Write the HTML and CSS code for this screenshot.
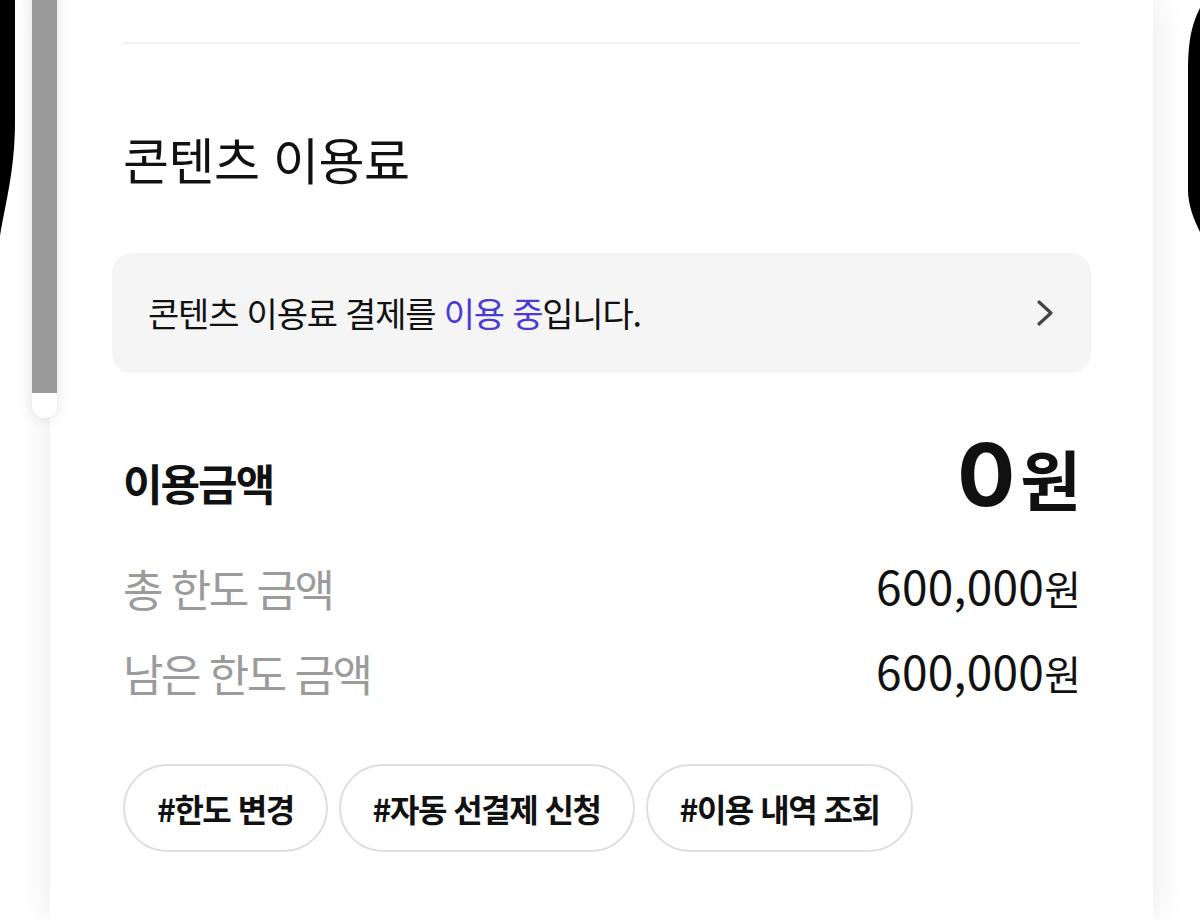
FILE: index.html
```html
<!DOCTYPE html>
<html lang="ko">
<head>
    <meta charset="UTF-8">
    <meta name="viewport" content="width=device-width, initial-scale=1.0">
    <title>콘텐츠 이용료</title>
    <link rel="stylesheet" href="styles.css">
</head>
<body>
    <div class="screen">
        <div class="card">
            <div class="divider"></div>

            <h2 class="title">콘텐츠 이용료</h2>

            <a class="notice" href="#">
                <span class="noticeText">콘텐츠 이용료 결제를 <em class="accent">이용 중</em>입니다.</span>
                <svg class="chevron" width="20" height="30" viewBox="0 0 20 30">
                    <polyline points="4,4 16,15 4,26" fill="none" stroke="#444" stroke-width="3.2" stroke-linecap="round" stroke-linejoin="round"/>
                </svg>
            </a>

            <div class="usage">
                <span class="usageLabel">이용금액</span>
                <span class="usageValue"><span class="zero">0</span>원</span>
            </div>

            <div class="limits">
                <div class="limitRow">
                    <span class="limitLabel">총 한도 금액</span>
                    <span class="limitValue">600,000<span class="won">원</span></span>
                </div>
                <div class="limitRow">
                    <span class="limitLabel">남은 한도 금액</span>
                    <span class="limitValue">600,000<span class="won">원</span></span>
                </div>
            </div>

            <div class="chips">
                <button class="chip">#한도 변경</button>
                <button class="chip">#자동 선결제 신청</button>
                <button class="chip">#이용 내역 조회</button>
            </div>
        </div>

        <!-- screen edge corners and scroll thumb lie over the page -->
        <svg class="edgeLeft" width="20" height="240" viewBox="0 0 20 240">
            <path d="M0,0 L15,0 L15,120 C15,170 6,200 0,236 Z" fill="#000"/>
        </svg>
        <svg class="edgeRight" width="14" height="240" viewBox="0 0 14 240">
            <path d="M14,8 C6,24 2,40 2,70 L2,190 C2,205 8,220 14,232 Z" fill="#000"/>
        </svg>
        <div class="scrollThumb"></div>
    </div>
</body>
</html>
```

FILE: styles.css
```css
* {
    box-sizing: border-box;
}
body {
    margin: 0;
    background-color: #fff;
    font-family: "Noto Sans CJK KR", "Noto Sans", sans-serif;
    color: #111;
}
.screen {
    position: relative;
    height: 919px;
    overflow: hidden;
}
.card {
    margin: 0 47px 0 50px;
    height: 919px;
    padding: 0 73px;
    background-color: #fff;
    box-shadow: 0 0 34px rgba(0, 0, 0, 0.09);
}
.divider {
    height: 44px;
    padding-top: 42px;
    background-color: #f1f1f1;
    background-clip: content-box;
}
.title {
    margin: 89px 0 0 0;
    font-size: 50px;
    font-weight: 400;
    line-height: 1;
    letter-spacing: -0.5px;
}
.notice {
    display: flex;
    align-items: center;
    justify-content: space-between;
    height: 120px;
    margin: 70px -11px 0 -11px;
    padding: 0 36px 0 36px;
    border-radius: 20px;
    background-color: #f5f5f5;
    color: #111;
    text-decoration: none;
}
.noticeText {
    font-size: 34px;
    letter-spacing: -1.2px;
    line-height: 1;
}
.accent {
    font-style: normal;
    color: #4a3ad6;
}
.usage {
    display: flex;
    justify-content: space-between;
    align-items: center;
    margin-top: 69px;
    height: 80px;
}
.usageLabel {
    font-size: 43px;
    font-weight: 700;
    letter-spacing: -2px;
}
.usageValue {
    padding-bottom: 14px;
    font-size: 66px;
    font-weight: 700;
    letter-spacing: -1px;
    line-height: 1;
}
.zero {
    font-family: Inter, "Noto Sans", sans-serif;
    font-size: 86px;
    margin-right: 6px;
}
.limits {
    margin-top: 23px;
}
.limitRow {
    display: flex;
    justify-content: space-between;
    align-items: center;
    height: 85px;
}
.limitLabel {
    font-size: 44px;
    color: #9b9b9b;
    letter-spacing: -2.5px;
}
.limitValue {
    padding-bottom: 6px;
    font-size: 46px;
    letter-spacing: 0.3px;
    color: #111;
}
.won {
    font-size: 40px;
    letter-spacing: -1px;
}
.chips {
    display: flex;
    gap: 11px;
    margin-top: 49px;
}
.chip {
    height: 88px;
    padding: 0 32px;
    border: 2px solid #dedede;
    border-radius: 44px;
    background-color: #fff;
    font-family: inherit;
    font-size: 32px;
    font-weight: 700;
    letter-spacing: -1.5px;
    color: #111;
    cursor: pointer;
}
.edgeLeft {
    position: absolute;
    left: 0;
    top: 0;
}
.edgeRight {
    position: absolute;
    right: 0;
    top: 0;
}
.scrollThumb {
    position: absolute;
    left: 32px;
    top: -20px;
    width: 25px;
    height: 438px;
    border-radius: 13px;
    background: linear-gradient(to bottom, #9a9a9a 0, #9a9a9a 413px, #fff 413px);
    box-shadow: 0 0 14px rgba(0, 0, 0, 0.12);
}
```
